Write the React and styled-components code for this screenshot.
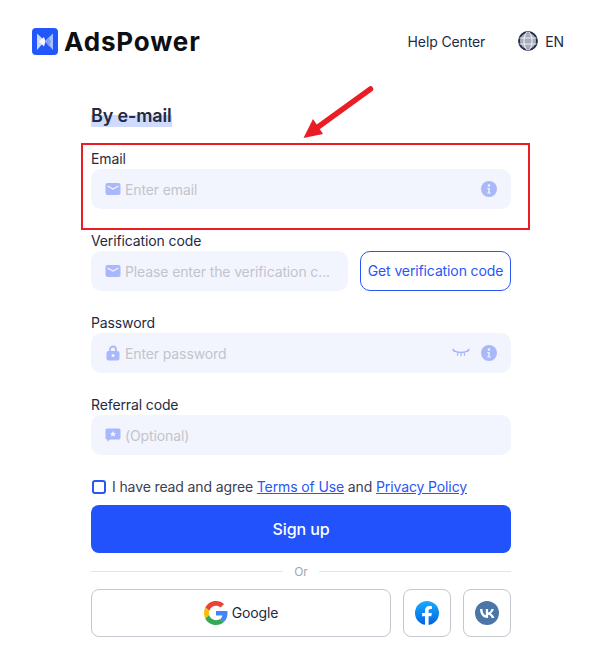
import React from "react";
import styled, { createGlobalStyle } from "styled-components";

const Global = createGlobalStyle`
  html, body { margin: 0; padding: 0; background: #fff; }
  body { font-family: Inter, "Liberation Sans", sans-serif; color: #1f2a44; letter-spacing: -0.12px; }
  * { box-sizing: border-box; }
`;
const Page = styled.div`
  position: relative;
  width: 608px;
  height: 663px;
  overflow: hidden;
`;
const Header = styled.header`
  display: flex;
  align-items: center;
  height: 82px;
  padding: 0 44px 0 32px;
`;
const Logo = styled.div`
  display: flex;
  align-items: center;
  gap: 6px;
  flex: 1;
`;
const LogoText = styled.span`
  font-size: 26px;
  font-weight: 700;
  letter-spacing: 0.85px;
  color: #0d0f14;
`;
const HelpLink = styled.span`
  font-size: 14px;
  color: #1f2a44;
  margin-right: 33px;
`;
const Lang = styled.span`
  display: flex;
  align-items: center;
  gap: 7px;
  font-size: 14px;
  color: #1f2a44;
`;
const Form = styled.main`
  width: 420px;
  margin: 0 0 0 91px;
  padding-top: 22px;
`;
const Title = styled.h1`
  display: block;
  width: fit-content;
  margin: 0 0 21px;
  font-size: 18px;
  line-height: 24px;
  font-weight: 600;
  letter-spacing: -0.15px;
  color: #1f2a44;
  background: linear-gradient(#cfdafd, #cfdafd) no-repeat 0 11px / 100% 12px;
`;
const Field = styled.div`
  margin-bottom: 22px;
`;
const Label = styled.div`
  font-size: 14px;
  line-height: 20px;
  color: #1f2a44;
`;
const Row = styled.div`
  display: flex;
  gap: 12px;
`;
const Input = styled.div`
  flex: 1;
  min-width: 0;
  height: 40px;
  display: flex;
  align-items: center;
  gap: 4px;
  padding: 0 14px;
  background: #f3f5fe;
  border-radius: 10px;
`;
const Placeholder = styled.span`
  flex: 1;
  min-width: 0;
  font-size: 14px;
  color: #c2c4cb;
  white-space: nowrap;
`;
const CodeButton = styled.button`
  width: 151px;
  height: 40px;
  padding: 0 0 2px;
  background: #fff;
  border: 1px solid #2a56f6;
  border-radius: 10px;
  color: #2a56f6;
  font: 400 14px Inter, "Liberation Sans", sans-serif;
  letter-spacing: -0.12px;
`;
const Agree = styled.div`
  display: flex;
  align-items: center;
  gap: 6px;
  height: 20px;
  font-size: 14px;
  color: #3a4152;
`;
const AgreeText = styled.span`
  margin-top: -1px;
`;
const Check = styled.span`
  width: 14px;
  height: 14px;
  margin-left: 1px;
  border: 2px solid #2a56f6;
  border-radius: 3px;
`;
const Terms = styled.a`
  color: #2a56f6;
  text-decoration: underline;
`;
const SignUp = styled.button`
  display: block;
  width: 100%;
  height: 48px;
  margin-top: 8px;
  background: #2152fb;
  color: #fff;
  border: 0;
  border-radius: 8px;
  font: 500 16px Inter, "Liberation Sans", sans-serif;
  letter-spacing: -0.12px;
`;
const Divider = styled.div`
  display: flex;
  align-items: center;
  gap: 11px;
  height: 36px;
  font-size: 12px;
  color: #a3a6ae;
  &::before, &::after {
    content: "";
    flex: 1;
    height: 1px;
    background: #e3e4e8;
  }
`;
const Socials = styled.div`
  display: flex;
  gap: 12px;
`;
const SocialButton = styled.button`
  flex: ${(p) => (p.$wide ? 1 : "none")};
  width: ${(p) => (p.$wide ? "auto" : "48px")};
  height: 48px;
  display: flex;
  align-items: center;
  justify-content: center;
  gap: 4px;
  padding: 0;
  background: #fff;
  border: 1px solid #c5c7ce;
  border-radius: 8px;
  color: #1f2a44;
  font: 400 14px Inter, "Liberation Sans", sans-serif;
  letter-spacing: -0.12px;
`;
const SocialLabel = styled.span`
  margin-top: -2px;
`;
const EyeSlot = styled.span`
  display: flex;
  margin-right: 7px;
`;
const Frame = styled.div`
  position: absolute;
  left: 81px;
  top: 143px;
  width: 449px;
  height: 87px;
  border: 2px solid #ea1c24;
`;
const Arrow = styled.svg`
  position: absolute;
  left: 296px;
  top: 80px;
`;

const MailIcon = () => (
  <svg width="16" height="16" viewBox="0 0 16 16">
    <rect x="0.5" y="2" width="15" height="12" rx="2" fill="#a9b8fd" />
    <path d="M2.5 5 L8 8 L13.5 5" fill="none" stroke="#f3f5fe" strokeWidth="1.2" />
  </svg>
);
const LockIcon = () => (
  <svg width="16" height="16" viewBox="0 0 16 16">
    <path d="M5 7V4.5a3 3 0 0 1 6 0V7" fill="none" stroke="#a9b8fd" strokeWidth="1.8" />
    <rect x="1.500" y="6" width="13" height="9.500" rx="2" fill="#a9b8fd" />
    <circle cx="8" cy="10.500" r="1.500" fill="#f3f5fe" />
  </svg>
);
const ChatIcon = () => (
  <svg width="16" height="16" viewBox="0 0 16 16">
    <path d="M2 1.500h12a1.500 1.500 0 0 1 1.500 1.500v8a1.500 1.500 0 0 1-1.500 1.500H5L2.500 15V12.500H2A1.500 1.500 0 0 1 .5 11V3A1.500 1.500 0 0 1 2 1.500z" fill="#a9b8fd" />
    <path d="M8 4l1 2 2.100.2-1.600 1.400.5 2.100L8 8.600 6 9.700l.5-2.100L4.900 6.200 7 6z" fill="#f3f5fe" />
  </svg>
);
const InfoIcon = () => (
  <svg width="16" height="16" viewBox="0 0 16 16">
    <circle cx="8" cy="8" r="8" fill="#a9b8fb" />
    <circle cx="8" cy="4.500" r="1.200" fill="#f3f5fe" />
    <path d="M6.300 7h2.400v4.500h1v1H6.200v-1h1.100V8h-1z" fill="#f3f5fe" />
  </svg>
);
const EyeIcon = () => (
  <svg width="18" height="10" viewBox="0 0 18 10" fill="none" stroke="#a0b0fb" strokeWidth="1.100" strokeLinecap="round">
    <path d="M1 2.500C5 5 13 5 17 2.500" />
    <path d="M1 1l1.800 2.300M17 1l-1.800 2.300M6 4.500l-.7 2.800M12 4.500l.7 2.800M9 5v3" />
  </svg>
);
const Globe = () => (
  <svg width="20" height="20" viewBox="0 0 20 20" fill="none">
    <circle cx="10" cy="10" r="9" fill="#a9adbb" stroke="#1f2a44" strokeWidth="1.800" />
    <ellipse cx="10" cy="10" rx="4" ry="9" stroke="#eef0f4" strokeWidth="1.100" />
    <path d="M1.500 7h17M1.500 13h17" stroke="#eef0f4" strokeWidth="1.100" />
  </svg>
);
const LogoMark = () => (
  <svg width="26" height="27" viewBox="0 0 26 27">
    <rect width="26" height="27" rx="4" fill="#2157fb" />
    <path d="M5 5.500L13 13 5 22z" fill="#c9d9ff" />
    <path d="M21 5.500L13 13l8 9z" fill="#a8c0ff" />
    <path d="M7 13.500L12 9l1.500 4.500L12 18.500z" fill="#f4f7ff" />
    <path d="M13 13.500L17 10l2 3.500-2 5z" fill="#7da0ff" />
  </svg>
);
const GoogleIcon = () => (
  <svg width="24" height="24" viewBox="0 0 48 48">
    <path fill="#EA4335" d="M24 9.500c3.500 0 6.700 1.200 9.200 3.600l6.900-6.900C35.900 2.400 30.500 0 24 0 14.600 0 6.500 5.400 2.600 13.200l8 6.200C12.400 13.700 17.700 9.500 24 9.500z" />
    <path fill="#4285F4" d="M47 24.500c0-1.600-.1-3.100-.4-4.500H24v9h12.900c-.6 3-2.300 5.500-4.800 7.200l7.700 6C44.300 37.900 47 31.800 47 24.500z" />
    <path fill="#FBBC05" d="M10.500 28.600c-.5-1.400-.8-3-.8-4.600s.3-3.200.8-4.600l-8-6.200C.9 16.500 0 20.100 0 24s.9 7.500 2.600 10.800z" />
    <path fill="#34A853" d="M24 48c6.500 0 11.900-2.100 15.900-5.800l-7.700-6c-2.200 1.400-4.900 2.300-8.200 2.300-6.300 0-11.600-4.200-13.500-9.900l-8 6.200C6.500 42.600 14.600 48 24 48z" />
  </svg>
);
const FacebookIcon = () => (
  <svg width="24" height="24" viewBox="0 0 24 24">
    <defs>
      <linearGradient id="fb" x1="0" y1="0" x2="0" y2="1">
        <stop offset="0" stopColor="#18acfe" />
        <stop offset="1" stopColor="#0163e0" />
      </linearGradient>
    </defs>
    <circle cx="12" cy="12" r="12" fill="url(#fb)" />
    <path d="M16.300 15.300l.5-3.300h-3.200V9.900c0-.9.400-1.800 1.900-1.800h1.400V5.300s-1.300-.2-2.600-.2c-2.600 0-4.300 1.600-4.300 4.400V12H7.100v3.300H10v8.600c.6.100 1.200.1 1.800.1s1.200 0 1.800-.1v-8.600z" fill="#fff" />
  </svg>
);
const VkIcon = () => (
  <svg width="24" height="24" viewBox="0 0 24 24">
    <circle cx="12" cy="12" r="12" fill="#4c76a8" />
    <path d="M12.900 17c-4.900 0-7.800-3.400-7.900-9h2.500c.1 4.100 1.900 5.900 3.300 6.200V8h2.300v3.600c1.400-.2 2.900-1.800 3.400-3.600h2.300c-.4 2.200-2 3.900-3.100 4.500 1.100.6 3 2 3.700 4.500h-2.600c-.6-1.700-1.900-3-3.700-3.200V17z" fill="#fff" />
  </svg>
);

export default function App() {
  return (
    <Page>
      <Global />
      <Header>
        <Logo>
          <LogoMark />
          <LogoText>AdsPower</LogoText>
        </Logo>
        <HelpLink>Help Center</HelpLink>
        <Lang>
          <Globe />
          EN
        </Lang>
      </Header>
      <Form>
        <Title>By e-mail</Title>
        <Field>
          <Label>Email</Label>
          <Input>
            <MailIcon />
            <Placeholder>Enter email</Placeholder>
            <InfoIcon />
          </Input>
        </Field>
        <Field>
          <Label>Verification code</Label>
          <Row>
            <Input>
              <MailIcon />
              <Placeholder>Please enter the verification c...</Placeholder>
            </Input>
            <CodeButton>Get verification code</CodeButton>
          </Row>
        </Field>
        <Field>
          <Label>Password</Label>
          <Input>
            <LockIcon />
            <Placeholder>Enter password</Placeholder>
            <EyeSlot>
              <EyeIcon />
            </EyeSlot>
            <InfoIcon />
          </Input>
        </Field>
        <Field>
          <Label>Referral code</Label>
          <Input>
            <ChatIcon />
            <Placeholder>(Optional)</Placeholder>
          </Input>
        </Field>
        <Agree>
          <Check />
          <AgreeText>
            I have read and agree <Terms>Terms of Use</Terms> and <Terms>Privacy Policy</Terms>
          </AgreeText>
        </Agree>
        <SignUp>Sign up</SignUp>
        <Divider>Or</Divider>
        <Socials>
          <SocialButton $wide>
            <GoogleIcon />
            <SocialLabel>Google</SocialLabel>
          </SocialButton>
          <SocialButton>
            <FacebookIcon />
          </SocialButton>
          <SocialButton>
            <VkIcon />
          </SocialButton>
        </Socials>
      </Form>
      <Frame />
      <Arrow width="84" height="64" viewBox="0 0 84 64">
        <path d="M74.500 9 L22 47" stroke="#ea1c24" strokeWidth="5.500" strokeLinecap="round" fill="none" />
        <path d="M7.500 58 L17 39 L27 54 z" fill="#ea1c24" />
      </Arrow>
    </Page>
  );
}
